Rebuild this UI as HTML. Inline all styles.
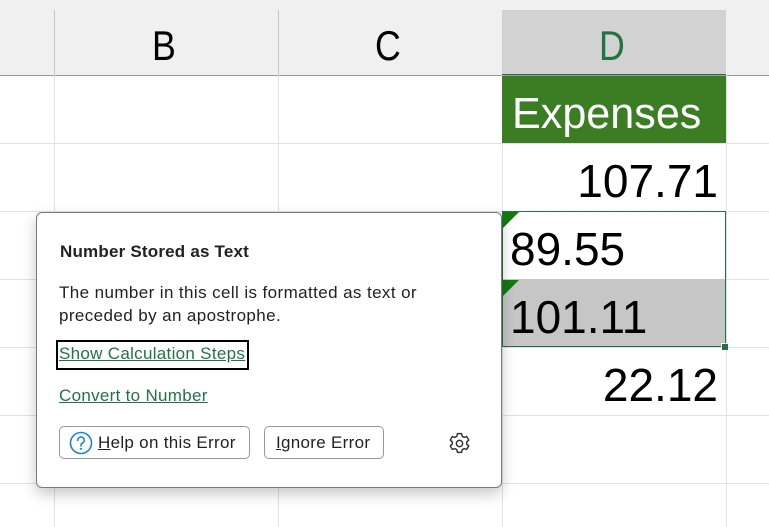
<!DOCTYPE html><html><head><style>
body{margin:0;width:769px;height:527px;overflow:hidden;background:#fff;font-family:"Liberation Sans",sans-serif;position:relative}
.a{position:absolute}
.hl{position:absolute;height:1px;background:#e1e1e1;left:0;width:769px}
.vl{position:absolute;width:1px;background:#e1e1e1;top:75px;height:452px}
.num{position:absolute;font-size:46px;color:#000;line-height:1}
.btn{position:absolute;top:426px;height:33px;border:1px solid #9a9a9a;border-radius:5px;box-sizing:border-box;font-size:17px;color:#222;line-height:31px}
.t{font-size:17px;letter-spacing:.3px}
</style></head><body>
<div class="a" style="left:0;top:0;width:769px;height:75px;background:#f0f0f0"></div>
<div class="a" style="left:502px;top:10px;width:224px;height:64px;background:#d2d2d2;border-bottom:2px solid #217346"></div>
<div class="a" style="left:54px;top:10px;width:1px;height:65px;background:#c8c8c8"></div>
<div class="a" style="left:278px;top:10px;width:1px;height:65px;background:#c8c8c8"></div>
<div class="a" style="left:0;top:75px;width:769px;height:1px;background:#9a9a9a"></div>
<div class="a" style="left:152px;top:22px;font-size:42px;transform:scaleX(.85);transform-origin:left">B</div>
<div class="a" style="left:375px;top:22px;font-size:42px;transform:scaleX(.85);transform-origin:left">C</div>
<div class="a" style="left:599px;top:22px;font-size:42px;color:#217346;transform:scaleX(.85);transform-origin:left">D</div>
<div class="hl" style="top:143px"></div><div class="hl" style="top:211px"></div><div class="hl" style="top:279px"></div><div class="hl" style="top:347px"></div><div class="hl" style="top:415px"></div><div class="hl" style="top:483px"></div>
<div class="vl" style="left:54px"></div><div class="vl" style="left:278px"></div><div class="vl" style="left:502px"></div><div class="vl" style="left:726px"></div>
<div class="a" style="left:502px;top:76px;width:224px;height:67px;background:#3b7d23"></div>
<div class="a" style="left:512px;top:89px;font-size:44px;color:#fff;transform:scaleX(.98);transform-origin:left">Expenses</div>
<div class="num" style="right:51px;top:158px">107.71</div>
<div class="a" style="left:502px;top:279px;width:224px;height:68px;background:#c6c6c6"></div>
<div class="a" style="left:502px;top:211px;width:224px;height:136px;border:1px solid #217346;box-sizing:border-box"></div>
<div class="a" style="left:721px;top:343px;width:6px;height:6px;background:#217346;border:1px solid #fff"></div>
<div class="a" style="left:503px;top:212px;width:0;height:0;border-top:16px solid #117a11;border-right:16px solid transparent"></div>
<div class="a" style="left:503px;top:280px;width:0;height:0;border-top:16px solid #117a11;border-right:16px solid transparent"></div>
<div class="num" style="left:510px;top:226px">89.55</div>
<div class="num" style="left:510px;top:294px">101.11</div>
<div class="num" style="right:51px;top:362px">22.12</div>
<div class="a" style="left:36px;top:212px;width:466px;height:276px;box-sizing:border-box;background:#fff;border:1px solid #7a7a7a;border-radius:6px;box-shadow:0 6px 14px rgba(0,0,0,.22)"></div>
<div class="a t" style="left:60px;top:242px;font-weight:bold;color:#222;letter-spacing:.2px">Number Stored as Text</div>
<div class="a t" style="left:59px;top:281px;color:#222;line-height:23px;letter-spacing:.4px">The number in this cell is formatted as text or<br>preceded by an apostrophe.</div>
<div class="a" style="left:56px;top:340px;width:193px;height:30px;box-sizing:border-box;border:2px solid #000"></div>
<div class="a t" style="left:59px;top:344px;color:#217346;text-decoration:underline">Show Calculation Steps</div>
<div class="a t" style="left:59px;top:386px;color:#217346;text-decoration:underline">Convert to Number</div>
<div class="btn" style="left:59px;width:191px">
<svg class="a" style="left:9px;top:4px" width="24" height="24" viewBox="0 0 24 24"><circle cx="12" cy="12" r="10.5" fill="none" stroke="#1a86d0" stroke-width="1.6"/><path d="M8.8 9.3a3.2 3.2 0 1 1 4.6 2.8c-.9.5-1.4 1-1.4 2v.8" fill="none" stroke="#1a86d0" stroke-width="1.6" stroke-linecap="round"/><circle cx="12" cy="17.8" r="1.1" fill="#1a86d0"/></svg>
<span class="a" style="left:38px;letter-spacing:.3px"><u>H</u>elp on this Error</span></div>
<div class="btn" style="left:264px;width:120px;padding-left:11px;letter-spacing:.3px"><u>I</u>gnore Error</div>
<svg class="a" style="left:447px;top:431px" width="25" height="25" viewBox="0 0 24 24"><path d="M10 2.5h4l.6 2.6 1.8 1 2.5-.8 2 3.4-2 1.8v2l2 1.8-2 3.4-2.5-.8-1.8 1-.6 2.6h-4l-.6-2.6-1.8-1-2.5.8-2-3.4 2-1.8v-2l-2-1.8 2-3.4 2.5.8 1.8-1z" fill="none" stroke="#333" stroke-width="1.4" stroke-linejoin="round"/><circle cx="12" cy="12" r="3" fill="none" stroke="#333" stroke-width="1.4"/></svg>
</body></html>
